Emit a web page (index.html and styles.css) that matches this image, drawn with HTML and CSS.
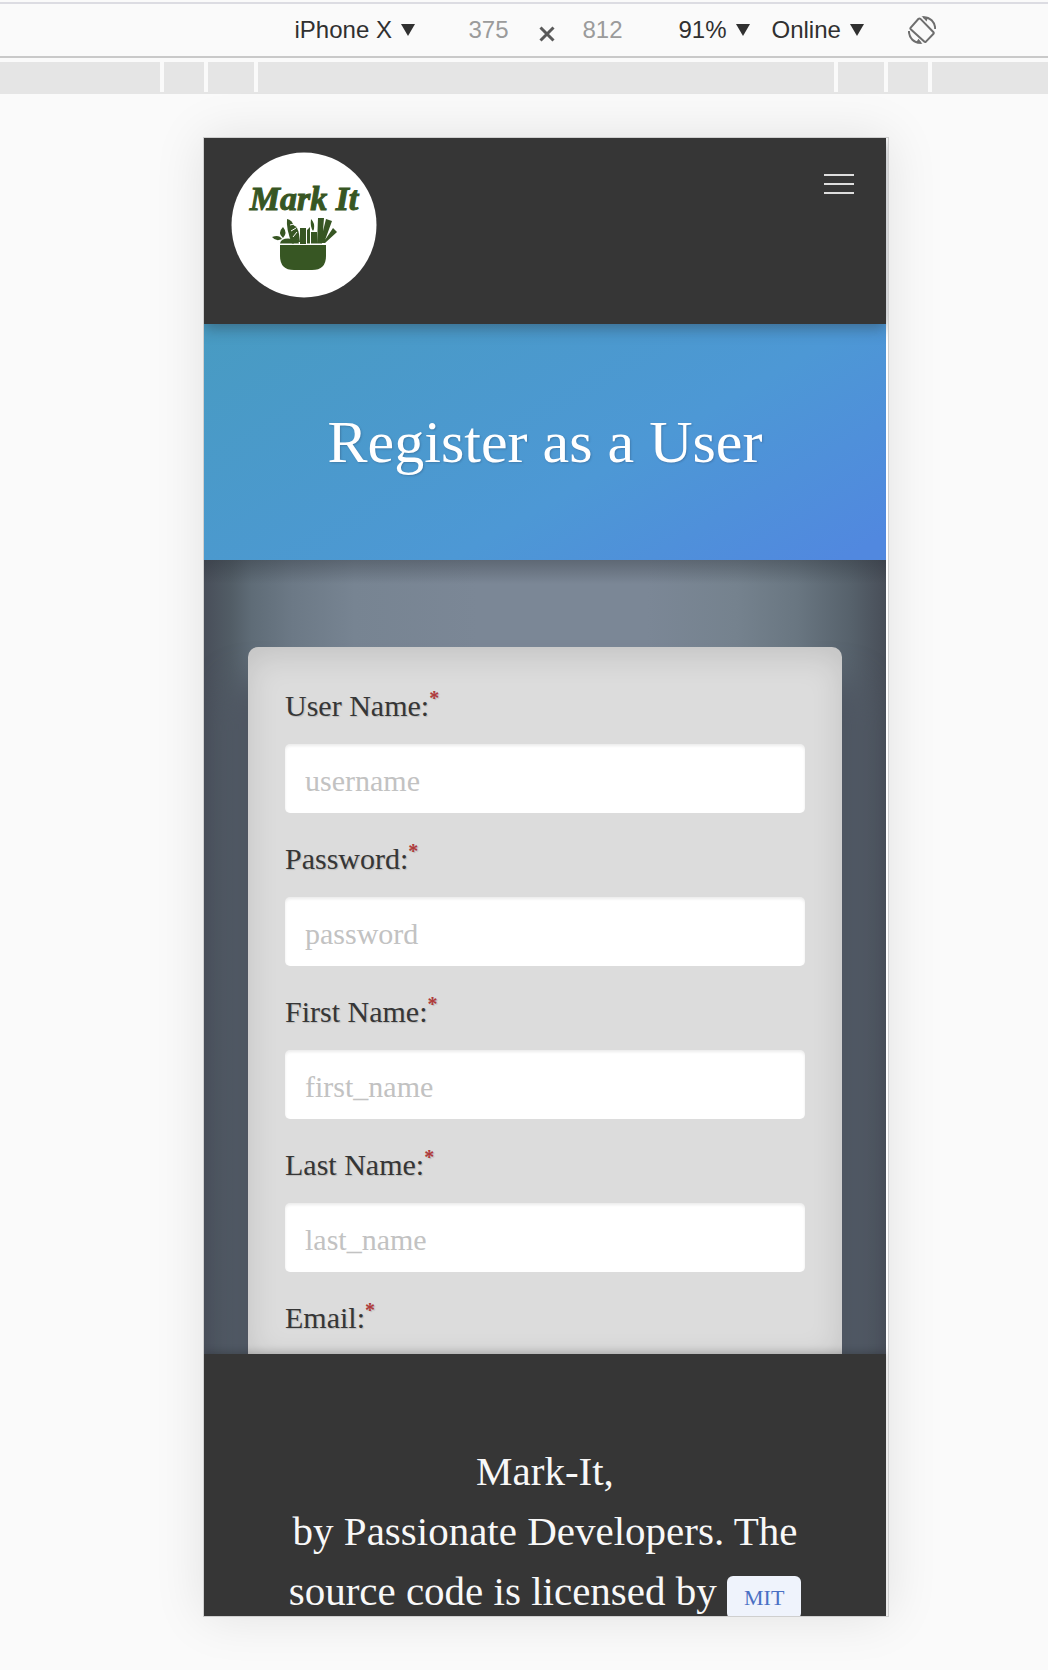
FILE: index.html
```html
<!DOCTYPE html>
<html lang="en">
<head>
<meta charset="utf-8">
<meta name="viewport" content="width=device-width, initial-scale=1">
<title>Mark It - Register as a User</title>
<link rel="stylesheet" href="styles.css">
</head>
<body>
<div class="toolbar">
  <label class="dropdown device">
    <select aria-label="Device"><option>iPhone X</option></select>
    <svg class="arrow" viewBox="0 0 14 12" aria-hidden="true"><path d="M0 0h14L7 12z"/></svg>
  </label>
  <div class="dimensions">
    <input class="size" type="text" value="375" aria-label="Width">
    <svg class="times" viewBox="0 0 16 16" aria-hidden="true"><path d="M1.500 1.500l13 13M14.500 1.500l-13 13"/></svg>
    <input class="size" type="text" value="812" aria-label="Height">
  </div>
  <label class="dropdown">
    <select aria-label="Zoom"><option>91%</option></select>
    <svg class="arrow" viewBox="0 0 14 12" aria-hidden="true"><path d="M0 0h14L7 12z"/></svg>
  </label>
  <label class="dropdown network">
    <select aria-label="Throttling"><option>Online</option></select>
    <svg class="arrow" viewBox="0 0 14 12" aria-hidden="true"><path d="M0 0h14L7 12z"/></svg>
  </label>
  <button class="rotate" type="button" aria-label="Rotate">
    <svg viewBox="0 0 28 28" aria-hidden="true">
      <path class="line" d="M2.500 11.800L10.500 2.800Q11.500 2 12.500 2.900L25.500 16.200Q26.200 17 25.500 17.800L18 25.600Q17 26.300 16.200 25.500L2.700 13.200Q2 12.500 2.500 11.800z"/>
      <path class="line" d="M15 1.200C22 .8 27 6 27.200 13M.9 15C1 22 6 27.200 13 26.800"/>
      <path class="head" d="M13.500 0l6.500 1.500-1.500 4zM14.500 28l-6.500-1.500 2.500-3.800z"/>
    </svg>
  </button>
</div>
<div class="ruler">
  <span class="seg start"></span><span class="seg outer"></span><span class="seg inner"></span><span class="seg center"></span><span class="seg inner"></span><span class="seg outer"></span><span class="seg end"></span>
</div>
<div class="stage">
  <div class="screen">
    <header class="header">
      <a class="logo" href="#" aria-label="Mark It">
        <svg viewBox="0 0 146 146">
          <circle cx="73" cy="73" r="72.500" fill="#fff"/>
          <text class="logo-name" x="73" y="58" text-anchor="middle">Mark It</text>
          <g fill="#375623">
            <path d="M49 93h46v11q0 14-14 14H63q-14 0-14-14z"/>
            <path d="M49 91.500q1-5 8-5 5 0 6 5z"/>
            <path d="M41 85q7-3 10 2-6 3-10-2zM52 86q-6-5 0-11 5 6 0 11z"/>
            <path d="M56 67q5 1 7 7l5 17.500h-7q-6-14-5-24.500z"/>
            <path d="M62 73q5 2 6 9l1 8h-2z"/>
            <path d="M69 76h6v18h-6zM76 78l3-3v16.500h-3zM80 67q4 4 3 10l-1 2q-3-4-2-12zM80 80h6v11.500h-6z"/>
            <path d="M87 66h6l-2 25.500h-5zM95 67l6 2-8 22h-4zM102 76l4 4-12 11h-2z"/>
          </g>
          <path d="M59 73l4-1M60 79l5-3M62 85l4-5M48 92.500h48" stroke="#fff"/>
        </svg>
      </a>
      <button class="menu" type="button" aria-label="Menu"><span></span><span></span><span></span></button>
    </header>
    <section class="hero"><h1>Register as a User</h1></section>
    <main class="content">
      <form class="card">
        <div class="field">
          <label for="username">User Name:<sup>*</sup></label>
          <input id="username" type="text" placeholder="username">
        </div>
        <div class="field">
          <label for="password">Password:<sup>*</sup></label>
          <input id="password" type="password" placeholder="password">
        </div>
        <div class="field">
          <label for="first">First Name:<sup>*</sup></label>
          <input id="first" type="text" placeholder="first_name">
        </div>
        <div class="field">
          <label for="last">Last Name:<sup>*</sup></label>
          <input id="last" type="text" placeholder="last_name">
        </div>
        <div class="field"><label>Email:<sup>*</sup></label></div>
      </form>
    </main>
    <footer class="footer">
      <p>Mark-It,<br>by Passionate Developers. The source code is licensed by <a href="#">MIT</a></p>
    </footer>
  </div>
</div>
</body>
</html>
```
FILE: styles.css
```css
* { box-sizing: border-box; }

body {
  margin: 0;
  padding-top: 2px;
  background: #fafafa;
  color: #343434;
  font-family: "Liberation Serif", serif;
}

button, input, select { font-family: inherit; }

/* Device toolbar */
.toolbar {
  display: flex;
  align-items: center;
  justify-content: center;
  height: 56px;
  padding-left: 182px;
  border-top: 2px solid #dcdce2;
  border-bottom: 2px solid #c9c9c9;
  font-family: "Liberation Sans", Arial, sans-serif;
}

.dropdown {
  display: flex;
  align-items: center;
  gap: 8px;
}

.dropdown select {
  appearance: none;
  padding: 0 0 2px;
  border: 0;
  background: none;
  color: #303030;
  font-size: 24px;
}

.arrow { width: 14px; height: 12px; fill: #303030; }
.network { margin-left: 22px; }

.dimensions {
  display: flex;
  align-items: center;
  gap: 28px;
  margin: 0 54px;
}

.size {
  width: 42px;
  padding: 0;
  border: 0;
  background: none;
  color: #9b9b9b;
  font-size: 24px;
}

.times {
  width: 16px;
  height: 16px;
  margin-top: 8px;
  stroke: #5a5a5a;
  stroke-width: 3;
}

.rotate {
  width: 28px;
  height: 28px;
  margin-left: 44px;
  padding: 0;
  border: 0;
  background: none;
}

.rotate svg { display: block; }
.rotate .line { fill: none; stroke: #6e6e6e; stroke-width: 2; }
.rotate .head { fill: #6e6e6e; }

/* Breakpoint ruler */
.ruler {
  display: flex;
  gap: 4px;
  height: 32px;
  margin-top: 4px;
  border-bottom: 2px solid #e5e5e5;
}

.seg { background: #e5e5e5; }
.start { flex: 1 1 43px; }
.end { flex: 1 1 0; }
.outer { width: 40px; }
.inner { width: 46px; }
.center { width: 576px; }

/* Emulated screen */
.stage {
  padding: 43px 0 53px 44px;
}

.screen {
  max-width: 686px;
  margin: 0 auto;
  padding-right: 2px;
  overflow: hidden;
  border: 1px solid #cfcfcf;
  background: #fff;
  box-shadow: 0 0 48px rgba(0, 0, 0, 0.1);
}

.header {
  position: relative;
  display: flex;
  align-items: flex-start;
  justify-content: space-between;
  height: 186px;
  padding: 14px 32px 0 27px;
  background: #363636;
  box-shadow: 0 4px 14px rgba(40, 50, 60, 0.45);
}

.logo svg { display: block; width: 146px; height: 146px; }

.logo-name {
  fill: #375623;
  stroke: #375623;
  stroke-width: 1;
  font-family: "Liberation Serif", serif;
  font-size: 34px;
  font-style: italic;
  font-weight: bold;
}

.menu {
  display: flex;
  flex-direction: column;
  gap: 7px;
  width: 30px;
  margin-top: 22px;
  padding: 0;
  border: 0;
  background: none;
}

.menu span { width: 100%; height: 2px; background: #dedede; }

.hero {
  padding: 83px 24px;
  background: linear-gradient(150deg, #489bc2 0%, #4d98d5 60%, #5188df 96%);
}

.hero h1 {
  margin: 0;
  color: #fff;
  font-size: 60px;
  font-weight: normal;
  line-height: 70px;
  text-align: center;
  text-shadow: 1px 1px 2px rgba(40, 60, 90, 0.3);
}

.content {
  padding: 87px 44px 0;
  overflow: hidden;
  background:
    linear-gradient(rgba(40, 46, 54, 0.35), rgba(40, 46, 54, 0) 24px),
    linear-gradient(90deg, #484e59 0%, #525d66 4%, #5f6c77 7%, #6c7986 13%, #778492 22%, #7b8796 40%, #7b8796 65%, #75828e 78%, #697681 87%, #56616b 95%, #484e58 100%);
}

.card {
  padding: 42px 37px 19px;
  border-radius: 10px 10px 0 0;
  background: #dcdcdc;
  box-shadow: inset 0 8px 32px rgba(0, 0, 0, 0.12), 0 56px 32px 24px #4e5561;
}

.field {
  display: flex;
  flex-direction: column;
  gap: 21px;
}

.field + .field { margin-top: 29px; }

.field label {
  color: #363636;
  font-size: 30px;
  line-height: 34px;
  text-shadow: 1px 1px 1px rgba(0, 0, 0, 0.15);
}

.field sup {
  color: #b03a3a;
  font-size: 20px;
  font-weight: bold;
  line-height: 0;
}

.field input {
  width: 100%;
  height: 69px;
  padding: 4px 20px 0;
  border: 0;
  border-radius: 5px;
  background: #fff;
  box-shadow: inset 0 2px 3px rgba(0, 0, 0, 0.08);
  font-size: 30px;
}

.field input::placeholder { color: #c2c2c2; }

.footer {
  position: relative;
  padding: 87px 80px 0;
  background: #363636;
  box-shadow: 0 -2px 8px rgba(0, 0, 0, 0.2);
}

.footer p {
  margin: 0 0 -5px;
  color: #f8f8f8;
  font-size: 41px;
  line-height: 60px;
  text-align: center;
}

.footer a {
  padding: 9px 17px;
  border-radius: 6px;
  background: #eff3fc;
  color: #4a70c4;
  font-size: 22px;
  line-height: 24px;
  text-decoration: none;
}
```
